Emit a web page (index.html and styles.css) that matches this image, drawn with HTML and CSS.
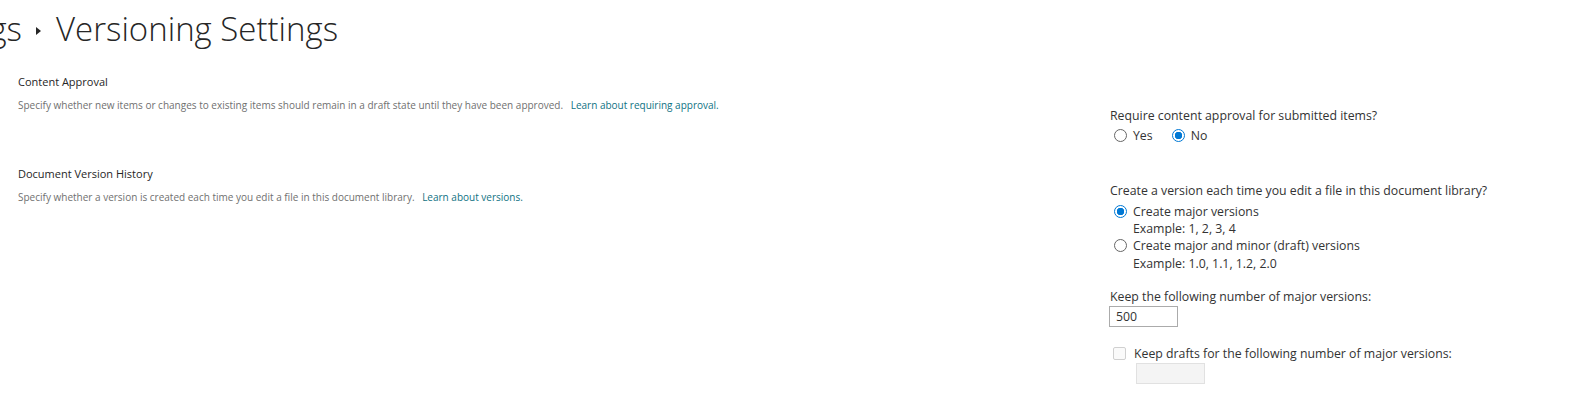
FILE: index.html
```html
<!DOCTYPE html>
<html lang="en">
<head>
<meta charset="utf-8">
<title>Versioning Settings</title>
<link rel="stylesheet" href="styles.css">
</head>
<body>
<div class="page">
  <h1 class="title"><span class="crumb">Settings</span><span class="sep" aria-hidden="true"></span><span class="current">Versioning Settings</span></h1>

  <section class="row row-approval">
    <div class="info">
      <h2 class="heading">Content Approval</h2>
      <p class="desc">Specify whether new items or changes to existing items should remain in a draft state until they have been approved. <a class="link" href="#">Learn about requiring approval.</a></p>
    </div>
    <div class="controls">
      <div class="question">Require content approval for submitted items?</div>
      <div class="inline-radios">
        <label class="opt"><input type="radio" name="approval"><span>Yes</span></label>
        <label class="opt"><input type="radio" name="approval" checked><span>No</span></label>
      </div>
    </div>
  </section>

  <section class="row row-history">
    <div class="info">
      <h2 class="heading">Document Version History</h2>
      <p class="desc">Specify whether a version is created each time you edit a file in this document library. <a class="link" href="#">Learn about versions.</a></p>
    </div>
    <div class="controls">
      <div class="question">Create a version each time you edit a file in this document library?</div>
      <div class="stack-radios">
        <label class="opt opt-block"><input type="radio" name="ver" checked><span>Create major versions<br><span class="example">Example: 1, 2, 3, 4</span></span></label>
        <label class="opt opt-block"><input type="radio" name="ver"><span>Create major and minor (draft) versions<br><span class="example">Example: 1.0, 1.1, 1.2, 2.0</span></span></label>
      </div>
      <div class="keep">
        <div class="question">Keep the following number of major versions:</div>
        <input class="num" type="text" value="500">
      </div>
      <div class="drafts">
        <label class="opt chk"><input type="checkbox" disabled><span>Keep drafts for the following number of major versions:</span></label>
        <input class="num num-disabled" type="text" disabled>
      </div>
    </div>
  </section>
</div>
</body>
</html>
```

FILE: styles.css
```css
html, body {
  margin: 0;
  padding: 0;
  background: #ffffff;
}

body {
  font-family: "Segoe UI", "Open Sans", "Noto Sans", sans-serif;
  color: #333333;
}

.title {
  margin: 0;
  padding-top: 7px;
  display: flex;
  align-items: center;
  font-weight: 300;
  font-size: 33px;
  color: #262626;
  white-space: nowrap;
  line-height: 44px;
}

.crumb {
  display: inline-block;
  width: 22px;
  overflow: hidden;
  direction: rtl;
  text-align: right;
}

.sep {
  display: inline-block;
  width: 0;
  height: 0;
  border-top: 4px solid transparent;
  border-bottom: 4px solid transparent;
  border-left: 5px solid #262626;
  margin: 3px 15px 0 14px;
}

.row {
  display: grid;
  grid-template-columns: 1092px auto;
  padding-left: 18px;
}

.row-approval {
  margin-top: 24px;
}

.row-history {
  margin-top: 23px;
}

.heading {
  margin: 0;
  font-size: 11px;
  font-weight: 400;
  color: #262626;
  line-height: 14px;
}

.desc {
  margin: 10px 0 0;
  font-size: 10px;
  color: #707070;
  line-height: 13px;
}

.link {
  color: #0f7283;
  text-decoration: none;
  margin-left: 5px;
}

.controls {
  padding-top: 32px;
  font-size: 12.3px;
  color: #333333;
  line-height: 17px;
}

.row-history .controls {
  padding-top: 15px;
}

.question {
  color: #333333;
}

.inline-radios {
  display: flex;
  gap: 19px;
  margin-top: 3px;
  padding-left: 4px;
}

.opt {
  display: flex;
  align-items: flex-start;
  gap: 6px;
}

.inline-radios .opt {
  gap: 6px;
}

.opt input[type="radio"] {
  appearance: none;
  -webkit-appearance: none;
  margin: 2px 0 0;
  width: 13px;
  height: 13px;
  border: 1px solid #666666;
  border-radius: 50%;
  box-sizing: border-box;
  background: #ffffff;
  flex: none;
}

.opt input[type="radio"]:checked {
  border-color: #0078d4;
  background: radial-gradient(circle, #0078d4 0 3.5px, #ffffff 4px);
}

.stack-radios {
  margin-top: 4px;
  padding-left: 4px;
}

.opt-block {
  line-height: 17.2px;
}

.keep {
  margin-top: 16px;
}

.num {
  display: block;
  box-sizing: border-box;
  width: 69px;
  height: 21px;
  margin: 1px 0 0 -1px;
  border: 1px solid #ababab;
  padding: 0 6px;
  font: inherit;
  font-size: 12.3px;
  color: #333333;
  background: #ffffff;
  outline: none;
}

.drafts {
  margin-top: 18px;
}

.chk {
  padding-left: 3px;
  gap: 8px;
}

.chk input[type="checkbox"] {
  appearance: none;
  -webkit-appearance: none;
  margin: 2px 0 0;
  width: 13px;
  height: 13px;
  border: 1px solid #d0d0d0;
  border-radius: 2px;
  background: #fafafa;
  box-sizing: border-box;
  flex: none;
}

.chk span {
  color: #333333;
}

.num-disabled {
  margin: 1px 0 0 26px;
  width: 69px;
  background: #f4f4f4;
  border-color: #e1e1e1;
}
```
